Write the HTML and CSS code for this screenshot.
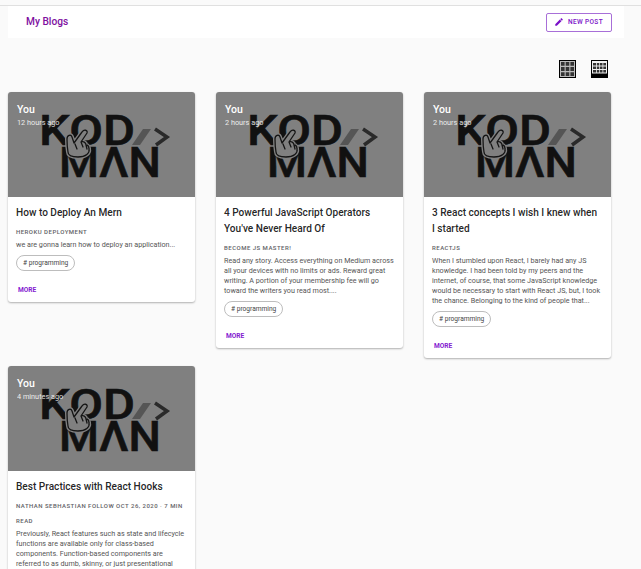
FILE: index.html
```html
<!DOCTYPE html>
<html lang="en">
<head>
<meta charset="utf-8">
<title>My Blogs</title>
<link rel="stylesheet" href="styles.css">
</head>
<body>
<svg class="defs" width="0" height="0" aria-hidden="true">
  <symbol id="logo" viewBox="0 0 187 105">
    <text class="logo-text" x="31" y="53" textLength="96" lengthAdjust="spacingAndGlyphs">KOD</text>
    <text class="logo-text" x="51" y="85" textLength="102" lengthAdjust="spacingAndGlyphs">MΛN</text>
    <path class="logo-slash" d="M124 53 L132 53 L143 37 L135 37 Z"/>
    <path class="logo-chevron" d="M147 37 L159 45 L148 53"/>
    <path class="logo-halo" d="M60 60 C59 54 59 50 59 47 C59 43 63 42 64 45 L66 51 L74 40 C76 37 80 38 79 41 L73 50 C76 49 78 51 78 53 C80 53 81 55 81 57 C82 61 78 65 70 65 C64 65 60 64 60 60 Z"/>
    <path class="logo-hand" d="M60 60 C59 54 59 50 59 47 C59 43 63 42 64 45 L66 51 L74 40 C76 37 80 38 79 41 L73 50 C76 49 78 51 78 53 C80 53 81 55 81 57 C82 61 78 65 70 65 C64 65 60 64 60 60 Z M67 52 L69 57 M73 50 L75 55 M78 53 L79 57"/>
  </symbol>
</svg>
<div class="app">
  <header class="topbar">
    <h1 class="topbar-title">My Blogs</h1>
    <button class="new-post">
      <svg class="pencil" viewBox="0 0 24 24"><path d="M3 17.25V21h3.75L17.81 9.94l-3.75-3.75L3 17.25zM20.71 7.04a1 1 0 0 0 0-1.41l-2.34-2.34a1 1 0 0 0-1.41 0l-1.83 1.83 3.75 3.75 1.83-1.83z"/></svg>
      <span>New Post</span>
    </button>
  </header>
  <div class="view-toggle">
    <svg class="view-icon" viewBox="0 0 17 18"><path class="frame" d="M0 0h17v18H0z"/><path class="cell" d="M1 1h15v16H1z"/><path class="dots" d="M2 2h3.6v3.8H2zM6.7 2h3.6v3.8H6.7zM11.4 2H15v3.8h-3.6zM2 7.1h3.6v3.8H2zM6.7 7.1h3.6v3.8H6.7zM11.4 7.1H15v3.8h-3.6zM2 12.2h3.6V16H2zM6.7 12.2h3.6V16H6.7zM11.4 12.2H15V16h-3.6z"/></svg>
    <svg class="view-icon" viewBox="0 0 17 18"><path class="frame" d="M0 0h17v18H0z"/><path class="top" d="M1 1h15v12.500H1z"/><path class="dots" d="M2 3h3v2.600H2zM5.800 3h2.500v2.600H5.800zM9 3h2.500v2.600H9zM12.300 3H15v2.600h-2.700zM2 6.500h3v2.600H2zM5.800 6.500h2.500v2.600H5.800zM9 6.500h2.500v2.600H9zM12.300 6.500H15v2.600h-2.700zM2 10h3v2.600H2zM5.800 10h2.500v2.600H5.800zM9 10h2.500v2.600H9zM12.300 10H15v2.600h-2.700z"/></svg>
  </div>
  <main class="cards">
    <article class="card">
      <div class="media">
        <svg class="logo" role="img" aria-label="KODMAN logo"><use href="#logo"/></svg>
        <div class="overlay"><div class="author">You</div><div class="time">12 hours ago</div></div>
      </div>
      <div class="content">
        <h2 class="title">How to Deploy An Mern</h2>
        <p class="subtitle">Heroku deployment</p>
        <p class="excerpt">we are gonna learn how to deploy an application...</p>
        <span class="chip"># programming</span>
      </div>
      <a class="more">More</a>
    </article>
    <article class="card">
      <div class="media">
        <svg class="logo" role="img" aria-label="KODMAN logo"><use href="#logo"/></svg>
        <div class="overlay"><div class="author">You</div><div class="time">2 hours ago</div></div>
      </div>
      <div class="content">
        <h2 class="title">4 Powerful JavaScript Operators You've Never Heard Of</h2>
        <p class="subtitle">Become JS master!</p>
        <p class="excerpt">Read any story. Access everything on Medium across all your devices with no limits or ads. Reward great writing. A portion of your membership fee will go toward the writers you read most....</p>
        <span class="chip"># programming</span>
      </div>
      <a class="more">More</a>
    </article>
    <article class="card">
      <div class="media">
        <svg class="logo" role="img" aria-label="KODMAN logo"><use href="#logo"/></svg>
        <div class="overlay"><div class="author">You</div><div class="time">2 hours ago</div></div>
      </div>
      <div class="content">
        <h2 class="title">3 React concepts I wish I knew when I started</h2>
        <p class="subtitle">ReactJS</p>
        <p class="excerpt">When I stumbled upon React, I barely had any JS knowledge. I had been told by my peers and the internet, of course, that some JavaScript knowledge would be necessary to start with React JS, but, I took the chance. Belonging to the kind of people that...</p>
        <span class="chip"># programming</span>
      </div>
      <a class="more">More</a>
    </article>
    <article class="card">
      <div class="media">
        <svg class="logo" role="img" aria-label="KODMAN logo"><use href="#logo"/></svg>
        <div class="overlay"><div class="author">You</div><div class="time">4 minutes ago</div></div>
      </div>
      <div class="content">
        <h2 class="title">Best Practices with React Hooks</h2>
        <p class="subtitle">Nathan Sebhastian Follow Oct 26, 2020 · 7 min read</p>
        <p class="excerpt">Previously, React features such as state and lifecycle functions are available only for class-based components. Function-based components are referred to as dumb, skinny, or just presentational components because they don't have access to state</p>
      </div>
    </article>
  </main>
</div>
</body>
</html>
```
FILE: styles.css
```css
* { box-sizing: border-box; }
html, body { margin: 0; height: 100%; overflow: hidden; }
body { background: #fafafa; font-family: Roboto, "Liberation Sans", sans-serif; color: rgba(0,0,0,.87); }
.defs { position: absolute; }
.app { border-top: 1px solid #e0e0e0; margin-top: 5px; padding: 0 17px 0 8px; }
.topbar { display: flex; align-items: center; justify-content: space-between; height: 32px; background: #fff; padding: 0 12px 0 18px; }
.topbar-title { margin: 0 0 1px; font-size: 10.2px; line-height: 16px; font-weight: 500; color: #800f9f; }
.new-post { display: flex; align-items: center; gap: 4px; width: 66px; height: 19px; padding: 0 0 0 7px; background: #fff; border: 1px solid #a86fd8; border-radius: 2px; color: #7a10c8; font: 500 6.5px/1 Roboto, sans-serif; letter-spacing: .35px; text-transform: uppercase; }
.pencil { width: 10px; height: 10px; fill: #7a10c8; flex: none; }
.view-toggle { display: flex; justify-content: flex-end; gap: 15px; height: 54px; padding: 22px 16px 0 0; }
.view-icon { width: 17px; height: 18px; display: block; }
.frame { fill: #000; }
.cell { fill: #bbb; }
.top { fill: #eee; }
.dots { fill: #333; }
.cards { display: grid; grid-template-columns: repeat(3, 187px); column-gap: 21px; row-gap: 8px; align-items: start; }
.card { background: #fff; border-radius: 3px; box-shadow: 0 1px 2px rgba(0,0,0,.3); overflow: hidden; }
.media { position: relative; height: 105px; background: #808080; }
.logo { display: block; width: 187px; height: 105px; }
.logo-text { font: 500 42px Roboto, sans-serif; fill: #111; stroke: #111; stroke-width: .6; }
.logo-slash { fill: #555; }
.logo-chevron { fill: none; stroke: #2a2a2a; stroke-width: 3.5; }
.logo-halo { fill: #808080; stroke: #808080; stroke-width: 4; stroke-linejoin: round; }
.logo-hand { fill: none; stroke: #151515; stroke-width: 1.3; stroke-linejoin: round; stroke-linecap: round; }
.overlay { position: absolute; top: 11px; left: 9px; color: #fff; }
.author { font-size: 10.5px; line-height: 14px; font-weight: 500; }
.time { font-size: 7.3px; line-height: 12px; opacity: .85; }
.content { padding: 8px 8px 0; }
.title { margin: 0; padding-right: 4px; font-size: 10.1px; line-height: 16px; font-weight: 500; }
.subtitle { margin: 3px 0 0; font-size: 6px; line-height: 15px; font-weight: 500; letter-spacing: .48px; text-transform: uppercase; color: #5f5f66; }
.excerpt { margin: 1px 0 0; font-size: 7.2px; line-height: 10px; color: #555; }
.chip { display: inline-flex; align-items: center; height: 16px; margin-top: 3px; padding: 0 6px; border: 1px solid #bdbdbd; border-radius: 8px; font-size: 6.6px; color: #444; }
.more { display: block; margin: 13px 0 0; padding: 0 10px; height: 18px; font-size: 6.6px; line-height: 13px; font-weight: 700; text-transform: uppercase; color: #8420d0; }
```
